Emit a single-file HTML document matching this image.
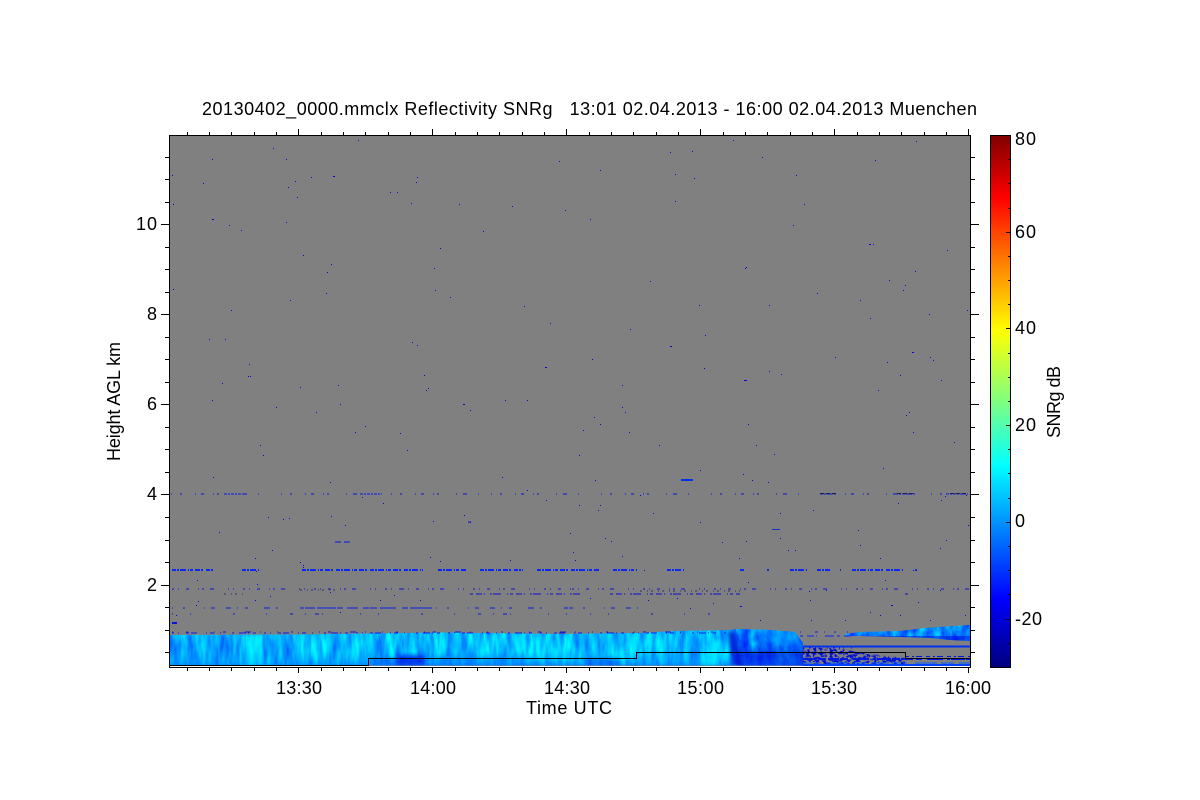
<!DOCTYPE html>
<html><head><meta charset="utf-8"><title>20130402_0000.mmclx Reflectivity SNRg</title>
<style>html,body{margin:0;padding:0;background:#fff;width:1200px;height:800px;overflow:hidden}svg{display:block}
text{font-family:"Liberation Sans",sans-serif;font-size:18px;fill:#000;white-space:pre}</style></head><body>
<svg width="1200" height="800" viewBox="0 0 1200 800" xmlns="http://www.w3.org/2000/svg">
<defs>
<linearGradient id="jet" x1="0" y1="0" x2="0" y2="1">
<stop offset="0" stop-color="#7f0000"/><stop offset=".117" stop-color="#ff0000"/><stop offset=".24" stop-color="#ff8000"/><stop offset=".367" stop-color="#ffff00"/><stop offset=".5" stop-color="#80ff80"/><stop offset=".62" stop-color="#00ffff"/><stop offset=".745" stop-color="#0080ff"/><stop offset=".87" stop-color="#0000ff"/><stop offset="1" stop-color="#00007f"/>
</linearGradient>
<linearGradient id="fade" x1="0" y1="0" x2="0" y2="1">
<stop offset="0" stop-color="#0060ff" stop-opacity=".5"/><stop offset=".1" stop-color="#0090ff" stop-opacity=".08"/><stop offset=".6" stop-color="#0090ff" stop-opacity=".04"/><stop offset=".88" stop-color="#0070ff" stop-opacity=".25"/><stop offset="1" stop-color="#0050ff" stop-opacity=".5"/>
</linearGradient>
<linearGradient id="fadeR" x1="0" y1="0" x2="0" y2="1">
<stop offset="0" stop-color="#0090ff" stop-opacity=".3"/><stop offset=".4" stop-color="#0040f0" stop-opacity=".2"/><stop offset=".7" stop-color="#0010d8" stop-opacity=".65"/><stop offset="1" stop-color="#0030f0" stop-opacity=".7"/>
</linearGradient>
<filter id="n1" x="0" y="0" width="100%" height="100%" color-interpolation-filters="sRGB">
<feTurbulence type="fractalNoise" baseFrequency="0.15 0.03" numOctaves="3" seed="7"/>
<feColorMatrix type="matrix" values="0 0 0 0 0  1 0 0 0 .24  0 0 0 0 1  0 0 0 0 1"/>
</filter>
<filter id="n2" x="0" y="0" width="100%" height="100%" color-interpolation-filters="sRGB">
<feTurbulence type="fractalNoise" baseFrequency="0.12 0.06" numOctaves="3" seed="3"/>
<feColorMatrix type="matrix" values="0 0 0 0 0  1.2 0 0 0 -.08  0 0 0 0 1  0 0 0 0 1"/>
</filter>
<filter id="n3" x="0" y="0" width="100%" height="100%" color-interpolation-filters="sRGB">
<feTurbulence type="fractalNoise" baseFrequency="0.3 0.4" numOctaves="2" seed="11"/>
<feColorMatrix type="matrix" values="0 0 0 0 0  0 0 0 0 .06  0 0 0 0 .85  8 0 0 0 -3.7"/>
</filter>
<filter id="b2"><feGaussianBlur stdDeviation="2"/></filter>
<clipPath id="band"><polygon points="170,635 300,634.5 440,632.5 560,634 640,633 675,631 730,630 736,629 770,630 795,632 803,643 803,665.5 170,665.5"/></clipPath>
<clipPath id="plot"><rect x="170" y="136" width="800" height="530"/></clipPath>
<clipPath id="upper"><polygon points="845,634 860,632 900,631 925,628 970,625 970,641 950,640 930,638 900,637 860,636 845,636"/></clipPath>
<clipPath id="low"><polygon points="803,648 835,648 870,654 905,658 905,665 803,665"/></clipPath>
</defs>

<rect x="170" y="135" width="800" height="532" fill="#808080"/>
<rect x="170" y="666" width="800" height="1" fill="#fff"/>

<!-- main echo band -->
<g clip-path="url(#band)">
<rect x="170" y="628" width="640" height="38" filter="url(#n1)"/>
<rect x="170" y="628" width="640" height="38" fill="url(#fade)"/>
<g filter="url(#b2)">
<rect x="248" y="636" width="14" height="30" fill="#00ffff" opacity=".5"/>
<rect x="372" y="658" width="25" height="8" fill="#0040f0" opacity=".45"/>
<rect x="397" y="655" width="28" height="11" fill="#0018e8" opacity=".8"/>
<rect x="430" y="656" width="105" height="10" fill="#0060ff" opacity=".3"/>
<rect x="585" y="658" width="35" height="8" fill="#0040f0" opacity=".5"/>
<polygon points="712,640 722,640 716,666 704,666" fill="#00ffff" opacity=".75"/>
</g>
<polygon points="736,629 800,629 810,666 738,666" filter="url(#n2)"/>
<polygon points="733,629 812,629 812,666 738,666" fill="url(#fadeR)"/>
<polygon points="727,631 735,631 744,666 732,666" fill="#0010d8" opacity=".85" filter="url(#b2)"/>
<polygon points="760,630 795,630 800,645 775,645" fill="#00a0ff" opacity=".4" filter="url(#b2)"/>
</g>

<!-- upper right layer -->
<g clip-path="url(#upper)">
<rect x="840" y="624" width="132" height="18" filter="url(#n2)"/>
<rect x="840" y="636" width="132" height="6" fill="#0010e0" opacity=".55"/>
</g>

<!-- speckled low cloud -->
<g clip-path="url(#low)">
<rect x="800" y="646" width="108" height="20" filter="url(#n3)"/>
</g>

<g clip-path="url(#plot)" fill="none" shape-rendering="crispEdges">
<!-- right lower structures -->
<path d="M803 646.500h167" stroke="#0030f0" stroke-width="2"/>
<path d="M803 665h167" stroke="#0040ff" stroke-width="2"/>
<path d="M803 663h167" stroke="#0060ff" stroke-width="1" stroke-dasharray="9 3 4 8 22 4 13 5 18 2"/>
<path d="M803 659h167" stroke="#0018e0" stroke-width="2" stroke-dasharray="14 1 8 2 11 3 6 5 16 4 3 1"/>
<path d="M905 656.500h65" stroke="#0018d0" stroke-dasharray="4 3 2 2 6 4"/>
<path d="M803 648h50" stroke="#0018d0" stroke-dasharray="1 5 2 4 1 3 1 7"/>
<!-- rows -->
<path d="M172 570h41M242 570h18M302 570h121M438 570h29M480 570h43M537 570h63M613 570h24M667 570h18M740 570h5M767 570h2M790 570h17M817 570h13M840 570h1M852 570h51M915 570h2" stroke="#0a28f0" stroke-width="2" stroke-dasharray="4 1 2 1 6 2 1 1 3 2 5 1 2 3"/>
<path d="M171 494h320M491 494h479" stroke="#0a14e0" stroke-dasharray="1 8 2 13 1 5 3 9 1 3 2 17 1 6 4 11 1 22"/>
<path d="M224 494h20M360 494h22M820 494h16M895 494h20M946 494h22" stroke="#0018f0" stroke-dasharray="3 1 2 1"/>
<path d="M820 493.500h16M897 493.500h18M950 493.500h18" stroke="#202040" stroke-dasharray="4 2"/>
<path d="M172 589h230M402 589h170M572 589h400" stroke="#0a14d8" stroke-dasharray="2 4 1 7 3 9 1 3 2 6 4 14 1 4 1 9"/>
<path d="M470 594h110M610 594h130M905 594h4" stroke="#0a10d0" stroke-dasharray="3 3 6 2 1 5 2 1 8 6 1 2"/>
<path d="M224 594h20M300 590h40M640 591h100" stroke="#303060" stroke-dasharray="2 5 1 3"/>
<path d="M172 608h400M572 608h70" stroke="#0a20e8" stroke-dasharray="1 10 2 19 1 6 4 11 5 6 1 7 3 16 6 6 2 22 4"/>
<path d="M172 614h400M590 614h120" stroke="#0a14d8" stroke-dasharray="1 17 1 42 2 31 1 23 3 12 1 9 4 3 1 37"/>
<path d="M172 623h5" stroke="#0a14e0" stroke-width="2"/>
<path d="M172 633h556" stroke="#0a1cf0" stroke-dasharray="2 4 1 7 3 2 6 9 1 3 4 6 1 11 2 5 7 2 1 4 3 8"/>
<path d="M172 632h556" stroke="#0a1ce0" stroke-dasharray="1 13 2 26 1 8 3 19 6 9 1 16"/>
<path d="M800 632h52" stroke="#0a1cf0" stroke-dasharray="1 14 3 6 1 9 2 11"/>
<path d="M800 636h52" stroke="#0a2cf0" stroke-dasharray="3 4 7 2 1 8 9 3"/>
<path d="M681 480h12" stroke="#0030f0" stroke-width="2"/>
<path d="M772 529.500h8" stroke="#1030c0"/>
<path d="M335 542h6M344 542h6M468 522h3" stroke="#0a14e0"/>
<!-- scatter -->
<path transform="translate(0 .5)" stroke="#0606d8" d="M173 204h1M172 175h1M203 183h1M212 159h1M212 219h2M229 225h1M241 230h1M273 148h1M286 159h1M295 181h1M297 197h1M311 177h1M333 176h2M358 140h1M390 192h1M397 192h1M411 203h1M416 182h1M417 177h1M459 204h1M483 231h1M512 206h1M559 161h1M565 210h1M590 219h1M600 170h1M670 152h1M675 174h1M692 151h1M694 178h1M675 201h1M733 140h1M762 157h1M796 175h1M804 204h1M875 160h1M916 141h1M947 250h1M286 222h1M288 187h1M793 225h1M869 244h2M873 244h1M746 267h1M745 268h1M440 248h1M303 255h1M327 272h1M331 264h1M326 293h1M250 376h1M248 376h1M173 289h1M231 310h1M290 300h1M209 339h1M225 339h1M434 268h1M435 290h1M450 297h1M524 306h1M550 323h1M630 329h1M650 281h1M705 335h1M699 305h1M769 305h1M817 293h1M860 300h1M870 318h1M889 280h1M905 285h1M903 290h1M915 271h1M929 314h1M930 357h1M887 362h1M941 380h1M967 310h1M912 352h2M835 357h1M781 374h1M769 371h1M744 380h3M704 368h1M670 346h2M592 359h1M546 367h1M527 400h1M463 404h2M412 342h1M417 345h1M338 385h1M340 404h1M300 387h1M316 412h1M249 364h1M276 407h1M260 445h1M263 455h1M213 477h1M222 383h1M212 400h1M355 432h1M365 426h1M400 433h1M407 450h1M428 388h1M424 375h1M426 390h1M470 410h1M505 400h1M545 367h1M594 417h1M600 424h1M622 385h1M622 407h1M625 412h1M583 430h1M579 455h1M629 432h1M659 445h1M700 470h1M748 424h1M756 445h1M774 454h1M768 482h1M752 480h1M743 474h1M883 468h1M913 432h1M909 412h1M906 415h1M954 442h1M878 390h1M900 375h1M933 360h1M968 525h1M945 496h1M941 500h1M898 503h1M858 530h1M813 510h1M640 495h1M595 480h1M600 505h1M605 538h1M579 505h1M570 533h1M546 500h1M527 490h1M502 477h1M470 522h1M464 515h1M433 521h1M383 503h1M345 525h1M331 516h1M330 482h1M362 497h1M283 519h1M268 517h1M289 518h1M219 532h1M272 550h1M255 558h1M256 571h1M300 562h1M303 567h1M303 565h1M430 557h1M440 561h1M510 560h1M573 552h1M598 510h1M611 541h1M575 560h1M622 556h1M644 570h1M653 513h1M700 522h1M722 542h1M739 558h1M746 541h1M780 538h1M780 513h1M788 550h1M795 550h1M860 545h1M880 558h1M913 570h1M946 540h1M940 548h1M966 495h1M885 580h1M826 590h1M748 582h1M648 600h1M713 603h1M677 598h1M590 598h1M197 580h1M198 601h1M175 622h1M176 615h1M196 605h1M255 600h1M257 584h1M270 596h1M340 612h1M330 592h1M380 600h1M394 595h1M420 600h1M690 608h1M740 606h2M810 600h1M809 591h1M760 620h1M811 620h1M891 605h2M918 602h1M965 615h1M940 590h1M900 615h1M930 620h1M880 615h1M870 612h1M845 620h1"/>
</g>

<!-- instrument line -->
<path d="M170 665.500H368.500V658.500H636.500V652.500H905.500V658.500H970" fill="none" stroke="#000" stroke-width="1.3" shape-rendering="crispEdges"/>

<!-- axes -->
<g fill="none" stroke="#000" shape-rendering="crispEdges">
<rect x="169.500" y="135.500" width="801" height="532" stroke-width="1"/>
<path d="M161 224.500h8M161 314.500h8M161 404.500h8M161 494.500h8M161 585.500h8
M165 157.500h4M165 179.500h4M165 202.500h4M165 247.500h4M165 269.500h4M165 292.500h4M165 337.500h4M165 359.500h4M165 382.500h4M165 427.500h4M165 449.500h4M165 472.500h4M165 517.500h4M165 540.500h4M165 562.500h4M165 607.500h4M165 630.500h4M165 652.500h4"/>
<path d="M971 224.500h8M971 314.500h8M971 404.500h8M971 494.500h8M971 585.500h8
M971 157.500h4M971 179.500h4M971 202.500h4M971 247.500h4M971 269.500h4M971 292.500h4M971 337.500h4M971 359.500h4M971 382.500h4M971 427.500h4M971 449.500h4M971 472.500h4M971 517.500h4M971 540.500h4M971 562.500h4M971 607.500h4M971 630.500h4M971 652.500h4"/>
<path d="M298.500 668v5M432.500 668v5M566.500 668v5M700.500 668v5M834.500 668v5M968.500 668v5
M187.500 668v3M209.500 668v3M231.500 668v3M254.500 668v3M276.500 668v3M321.500 668v3M343.500 668v3M365.500 668v3M388.500 668v3M410.500 668v3M455.500 668v3M477.500 668v3M499.500 668v3M522.500 668v3M544.500 668v3M589.500 668v3M611.500 668v3M633.500 668v3M656.500 668v3M678.500 668v3M723.500 668v3M745.500 668v3M767.500 668v3M790.500 668v3M812.500 668v3M857.500 668v3M879.500 668v3M901.500 668v3M924.500 668v3M946.500 668v3"/>
<path d="M298.500 129v6M432.500 129v6M566.500 129v6M700.500 129v6M834.500 129v6M968.500 129v6
M187.500 132v3M209.500 132v3M231.500 132v3M254.500 132v3M276.500 132v3M321.500 132v3M343.500 132v3M365.500 132v3M388.500 132v3M410.500 132v3M455.500 132v3M477.500 132v3M499.500 132v3M522.500 132v3M544.500 132v3M589.500 132v3M611.500 132v3M633.500 132v3M656.500 132v3M678.500 132v3M723.500 132v3M745.500 132v3M767.500 132v3M790.500 132v3M812.500 132v3M857.500 132v3M879.500 132v3M901.500 132v3M924.500 132v3M946.500 132v3"/>
</g>

<!-- colour bar -->
<rect x="990.500" y="135.500" width="20" height="532" fill="url(#jet)" stroke="#000" stroke-width="1" shape-rendering="crispEdges"/>
<path d="M1008 159.500h2M1008 183.500h2M1008 208.500h2M1006 232.500h4M1008 256.500h2M1008 280.500h2M1008 304.500h2M1006 328.500h4M1008 353.500h2M1008 377.500h2M1008 401.500h2M1006 425.500h4M1008 449.500h2M1008 473.500h2M1008 498.500h2M1006 522.500h4M1008 546.500h2M1008 570.500h2M1008 594.500h2M1006 619.500h4M1008 643.500h2" stroke="#000" fill="none" shape-rendering="crispEdges"/>

<!-- text -->
<text x="202" y="115" textLength="775" lengthAdjust="spacing">20130402_0000.mmclx Reflectivity SNRg&#160;&#160;&#160;13:01 02.04.2013 - 16:00 02.04.2013 Muenchen</text>
<text x="136" y="230" textLength="21">10</text>
<text x="147" y="320">8</text>
<text x="147" y="410">6</text>
<text x="147" y="500">4</text>
<text x="147" y="591">2</text>
<text x="276" y="694" textLength="46">13:30</text>
<text x="410" y="694" textLength="46">14:00</text>
<text x="544" y="694" textLength="46">14:30</text>
<text x="677" y="694" textLength="47">15:00</text>
<text x="811" y="694" textLength="46">15:30</text>
<text x="945" y="694" textLength="46">16:00</text>
<text x="526" y="714" textLength="86">Time UTC</text>
<text transform="translate(120 461) rotate(-90)" textLength="119">Height AGL km</text>
<text x="1015" y="145" textLength="21">80</text>
<text x="1015" y="238" textLength="21">60</text>
<text x="1015" y="334" textLength="21">40</text>
<text x="1015" y="431" textLength="21">20</text>
<text x="1015" y="527">0</text>
<text x="1015" y="625" textLength="27">-20</text>
<text transform="translate(1060 438) rotate(-90)" textLength="72">SNRg dB</text>
</svg>
</body></html>
